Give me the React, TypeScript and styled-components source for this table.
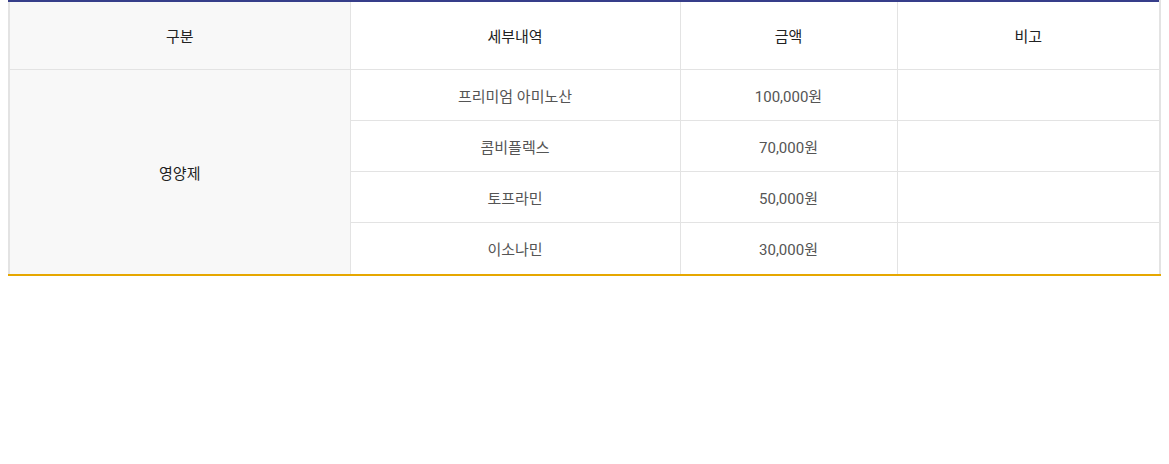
import { createGlobalStyle, styled } from 'styled-components';

type Item = {
	name: string;
	price: string;
	note?: string;
};

const items: Item[] = [
	{ name: '프리미엄 아미노산', price: '100,000원' },
	{ name: '콤비플렉스', price: '70,000원' },
	{ name: '토프라민', price: '50,000원' },
	{ name: '이소나민', price: '30,000원' },
];

const GlobalStyle = createGlobalStyle`
	body {
		margin: 0 8px;
		background: #fff;
		font-family: Roboto, 'Noto Sans CJK KR', sans-serif;
	}
`;

function App() {
	return (
		<>
			<GlobalStyle />
			<Table>
				<colgroup>
					<col style={{ width: 341 }} />
					<col style={{ width: 330 }} />
					<col style={{ width: 217 }} />
					<col />
				</colgroup>
				<thead>
					<tr>
						<HeadCell $shaded>구분</HeadCell>
						<HeadCell>세부내역</HeadCell>
						<HeadCell>금액</HeadCell>
						<HeadCell>비고</HeadCell>
					</tr>
				</thead>
				<tbody>
					{items.map((item, index) => (
						<tr key={item.name}>
							{index === 0 && (
								<GroupCell rowSpan={items.length}>영양제</GroupCell>
							)}
							<Cell $last={index === items.length - 1}>{item.name}</Cell>
							<Cell $last={index === items.length - 1}>{item.price}</Cell>
							<Cell $last={index === items.length - 1}>{item.note ?? ''}</Cell>
						</tr>
					))}
				</tbody>
			</Table>
		</>
	);
}

const Table = styled.table`
	width: 100%;
	border-collapse: collapse;
	table-layout: fixed;
	border-top: 2px solid #363e8a;
	border-bottom: 2px solid #e6a700;
	border-left: 2px solid #e3e3e3;
	border-right: 2px solid #e3e3e3;
	font-size: 15px;
	text-align: center;
`;

const HeadCell = styled.th<{ $shaded?: boolean }>`
	height: 67px;
	padding: 0;
	font-weight: 400;
	color: #222;
	background: ${({ $shaded }) => ($shaded ? '#f8f8f8' : '#fff')};
	border-right: 1px solid #e3e3e3;
	border-bottom: 1px solid #e3e3e3;
`;

const Cell = styled.td<{ $last?: boolean }>`
	height: ${({ $last }) => ($last ? '51px' : '50px')};
	padding: 0;
	color: #555;
	border-right: 1px solid #e3e3e3;
	border-bottom: 1px solid #e3e3e3;
`;

const GroupCell = styled.td`
	padding: 0;
	color: #222;
	background: #f8f8f8;
	border-right: 1px solid #e3e3e3;
	border-bottom: 1px solid #e3e3e3;
`;

export default App;
